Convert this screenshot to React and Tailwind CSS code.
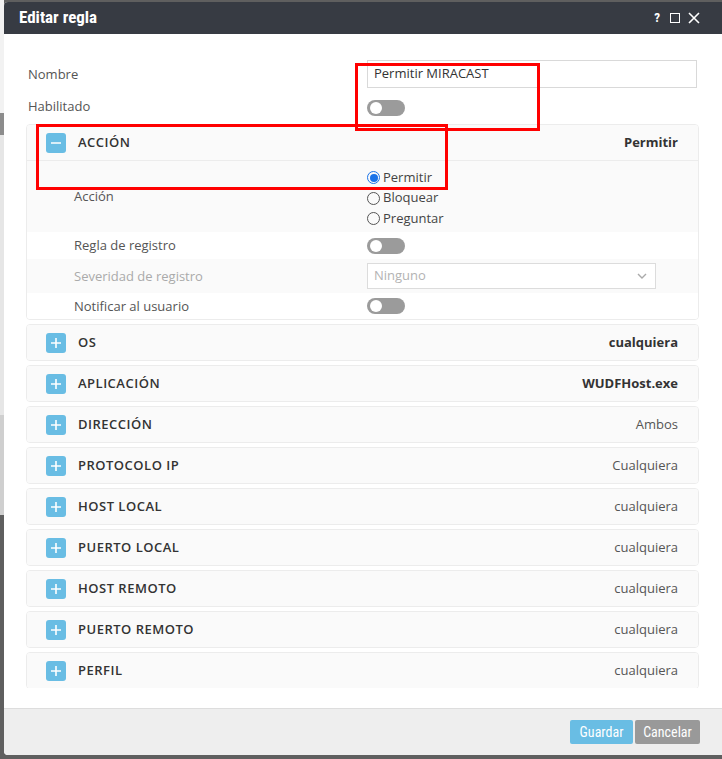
import React from "react";

const font = { fontFamily: '"Open Sans", "Noto Sans", Arial, sans-serif' };
const narrow = { fontFamily: '"Liberation Sans Narrow", "Roboto Condensed", Roboto, Arial, sans-serif' };

function Toggle() {
  return (
    <div className="w-[38px] h-[16px] rounded-full bg-[#9b9b9b] relative">
      <div className="absolute left-[3px] top-[2px] w-[12px] h-[12px] rounded-full bg-white" />
    </div>
  );
}

function Radio({ checked, label }) {
  return (
    <div className="flex items-center h-[20.5px] gap-[3px]">
      {checked ? (
        <div className="w-[13px] h-[13px] rounded-full border border-[#1a73e8] flex items-center justify-center">
          <div className="w-[8px] h-[8px] rounded-full bg-[#1a73e8]" />
        </div>
      ) : (
        <div className="w-[13px] h-[13px] rounded-full border border-[#555]" />
      )}
      <span className="text-[13px] text-[#444]">{label}</span>
    </div>
  );
}

function SquareIcon({ minus }) {
  return (
    <div className="w-[20px] h-[20px] rounded-[3px] bg-[#69bde4] flex items-center justify-center shrink-0">
      <svg width="12" height="12" viewBox="0 0 12 12">
        <line x1="1" y1="6" x2="11" y2="6" stroke="white" strokeWidth="1.6" />
        {!minus && <line x1="6" y1="1" x2="6" y2="11" stroke="white" strokeWidth="1.6" />}
      </svg>
    </div>
  );
}

function PanelHeader({ title, value, bold, minus, bottomBorder, h }) {
  return (
    <div className={`${h} flex items-center pl-[19px] pr-[20px] bg-[#fafafa] ${bottomBorder ? "border-b border-[#ececec]" : ""}`}>
      <SquareIcon minus={minus} />
      <span className="ml-[12px] text-[13px] font-semibold tracking-[0.5px] text-[#333]">{title}</span>
      <span className={`ml-auto text-[13px] ${bold ? "font-bold text-[#333]" : "text-[#555]"}`}>{value}</span>
    </div>
  );
}

const collapsed = [
  { t: "OS", v: "cualquiera", b: true },
  { t: "APLICACIÓN", v: "WUDFHost.exe", b: true },
  { t: "DIRECCIÓN", v: "Ambos" },
  { t: "PROTOCOLO IP", v: "Cualquiera" },
  { t: "HOST LOCAL", v: "cualquiera" },
  { t: "PUERTO LOCAL", v: "cualquiera" },
  { t: "HOST REMOTO", v: "cualquiera" },
  { t: "PUERTO REMOTO", v: "cualquiera" },
  { t: "PERFIL", v: "cualquiera" },
];

export default function App() {
  return (
    <div className="w-[722px] h-[759px] overflow-hidden flex bg-[#5f5f5f]" style={font}>
      <div className="w-[4px] flex flex-col shrink-0">
        <div className="h-[113px] bg-[#f2f2f2]" />
        <div className="h-[22px] bg-[#8c8c8c]" />
        <div className="h-[280px] bg-[#e6e6e6]" />
        <div className="h-[100px] bg-[#cfcfcf]" />
        <div className="flex-1 bg-[#5f5f5f]" />
      </div>
      <div className="mt-[2px] h-[753px] w-[718px] flex flex-col rounded-l-[4px] overflow-hidden bg-white">
        <div className="h-[32px] bg-[#373b43] flex items-center pl-[15px] pr-[22px] shrink-0">
          <span className="text-white text-[17px] font-bold" style={narrow}>Editar regla</span>
          <div className="ml-auto flex items-center text-white">
            <span className="text-[13px] font-bold mr-[10px]" style={narrow}>?</span>
            <div className="w-[10px] h-[10px] border border-white mr-[8px]" />
            <svg width="12" height="12" viewBox="0 0 12 12">
              <path d="M1 1 L11 11 M11 1 L1 11" stroke="white" strokeWidth="1.6" />
            </svg>
          </div>
        </div>
        <div className="relative flex-1 flex flex-col">
          <div className="h-[654px] overflow-hidden pl-[22px] pr-[23px] pt-[26px]">
            <div className="flex items-center h-[28px]">
              <div className="w-[341px] pl-[2px] pt-[1px] text-[13px] text-[#555]">Nombre</div>
              <div className="w-[330px] h-[28px] border border-[#d9d9d9] flex items-center px-[6px] text-[13px] text-[#333]">Permitir MIRACAST</div>
            </div>
            <div className="flex items-center h-[32px] mt-[2px]">
              <div className="w-[341px] pl-[2px] pt-[2px] text-[13px] text-[#555]">Habilitado</div>
              <div className="mt-[4px]"><Toggle /></div>
            </div>
            <div className="mt-[2px] border border-[#ececec] rounded-[4px] overflow-hidden">
              <PanelHeader title="ACCIÓN" value="Permitir" bold minus bottomBorder h="h-[36px]" />
              <div className="flex items-center bg-[#fafafa] h-[71px]">
                <div className="w-[340px] pl-[47px] pt-[1px] text-[13px] text-[#555]">Acción</div>
                <div className="flex flex-col pt-[3px]">
                  <Radio checked label="Permitir" />
                  <Radio label="Bloquear" />
                  <Radio label="Preguntar" />
                </div>
              </div>
              <div className="flex items-center bg-white h-[27px]">
                <div className="w-[340px] pl-[47px] text-[13px] text-[#555]">Regla de registro</div>
                <Toggle />
              </div>
              <div className="flex items-center bg-[#fafafa] h-[34px]">
                <div className="w-[340px] pl-[47px] pt-[1px] text-[13px] text-[#aaa]">Severidad de registro</div>
                <div className="w-[289px] h-[26px] border border-[#dcdcdc] bg-white flex items-center pl-[6px] pr-[8px] text-[13px] text-[#b3b3b3]">
                  Ninguno
                  <svg className="ml-auto" width="10" height="10" viewBox="0 0 10 10">
                    <path d="M1 3 L5 7 L9 3" stroke="#aaa" strokeWidth="1.4" fill="none" />
                  </svg>
                </div>
              </div>
              <div className="flex items-center bg-white h-[26px]">
                <div className="w-[340px] pl-[47px] pt-[1px] text-[13px] text-[#555]">Notificar al usuario</div>
                <Toggle />
              </div>
            </div>
            {collapsed.map((p) => (
              <div key={p.t} className="mt-[4px] border border-[#ececec] rounded-[4px] overflow-hidden">
                <PanelHeader title={p.t} value={p.v} bold={p.b} h="h-[35px]" />
              </div>
            ))}
          </div>
          <div className="h-[20px]" />
          <div className="flex-1 bg-[#eeeeee] border-t border-[#dddddd] flex items-center justify-end pr-[22px] gap-[2px]">
            <div className="h-[24px] w-[63px] rounded-[2px] bg-[#69bde4] text-white text-[14px] flex items-center justify-center" style={narrow}>Guardar</div>
            <div className="h-[24px] w-[65px] rounded-[2px] bg-[#999999] text-white text-[14px] flex items-center justify-center" style={narrow}>Cancelar</div>
          </div>
          <div className="absolute left-[351px] top-[29px] w-[185px] h-[68px] border-[3px] border-[#ff0000] pointer-events-none" />
          <div className="absolute left-[32px] top-[90px] w-[412px] h-[66px] border-[3px] border-[#ff0000] pointer-events-none" />
        </div>
      </div>
    </div>
  );
}
